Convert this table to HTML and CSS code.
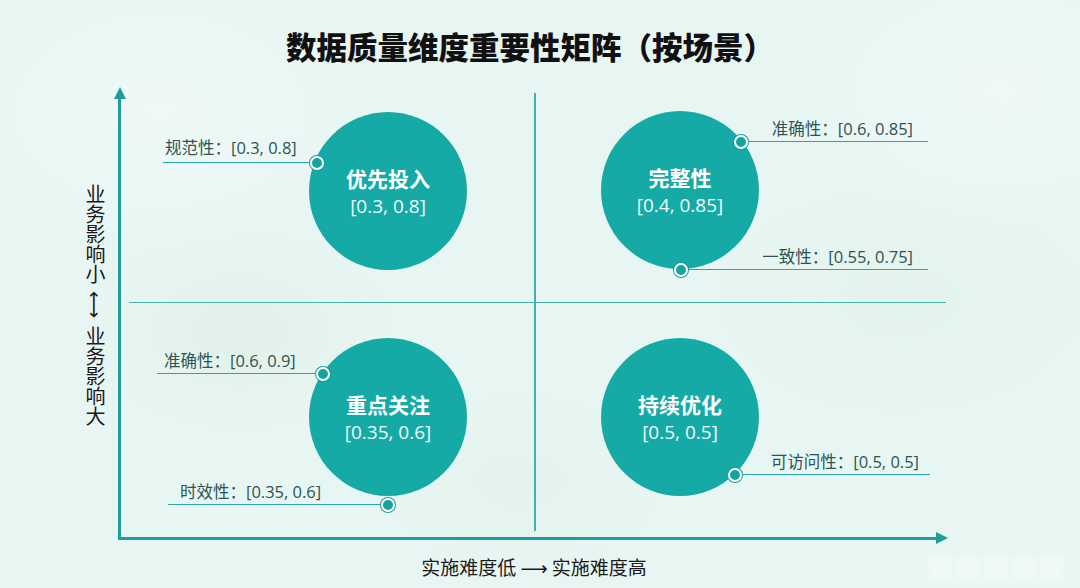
FILE: index.html
```html
<!DOCTYPE html>
<html lang="zh-CN">
<head>
<meta charset="utf-8">
<title>数据质量维度重要性矩阵（按场景）</title>
<link rel="stylesheet" href="styles.css">
</head>
<body>
<div class="page">
  <header class="title-row">
    <h1 class="title">数据质量维度重要性矩阵（按场景）</h1>
  </header>
  <main class="middle">
    <div class="ylabel">
      <span class="vtext">业务影响小</span>
      <span class="varrow">⟷</span>
      <span class="vtext">业务影响大</span>
    </div>
    <div class="plot">
      <div class="axis-y"></div>
      <svg class="arrow-up" width="12" height="12" viewBox="0 0 12 12"><polygon points="6,0 12,12 0,12" /></svg>
      <div class="axis-x"></div>
      <svg class="arrow-right" width="12" height="12" viewBox="0 0 12 12"><polygon points="0,0 12,6 0,12" /></svg>
      <div class="divider-v"></div>
      <div class="divider-h"></div>

      <div class="bubble b-tl"><span class="b-name">优先投入</span><span class="b-val">[0.3, 0.8]</span></div>
      <div class="bubble b-tr"><span class="b-name">完整性</span><span class="b-val">[0.4, 0.85]</span></div>
      <div class="bubble b-bl"><span class="b-name">重点关注</span><span class="b-val">[0.35, 0.6]</span></div>
      <div class="bubble b-br"><span class="b-name">持续优化</span><span class="b-val">[0.5, 0.5]</span></div>

      <div class="ann ann-left a-tl1"><span class="ann-text">规范性：[0.3, 0.8]</span><i class="dot"></i></div>
      <div class="ann ann-right a-tr1"><span class="ann-text">准确性：[0.6, 0.85]</span><i class="dot"></i></div>
      <div class="ann ann-right a-tr2"><span class="ann-text">一致性：[0.55, 0.75]</span><i class="dot"></i></div>
      <div class="ann ann-left a-bl1"><span class="ann-text">准确性：[0.6, 0.9]</span><i class="dot"></i></div>
      <div class="ann ann-left a-bl2"><span class="ann-text">时效性：[0.35, 0.6]</span><i class="dot"></i></div>
      <div class="ann ann-right a-br1"><span class="ann-text">可访问性：[0.5, 0.5]</span><i class="dot"></i></div>
    </div>
  </main>
  <footer class="xlabel">实施难度低<span class="harrow">⟶</span>实施难度高</footer>
  <div class="watermark"><i></i><i></i><i></i><i></i><i></i></div>
</div>
</body>
</html>
```

FILE: styles.css
```css
* { box-sizing: border-box; }
html, body {
  margin: 0;
  padding: 0;
}
body {
  width: 1080px;
  height: 588px;
  overflow: hidden;
  font-family: "Open Sans", "Noto Sans CJK SC", sans-serif;
  background-color: #e8f6f3;
  background-image:
    radial-gradient(ellipse 220px 140px at 240px 330px, rgba(220,238,226,0.6), rgba(220,238,226,0) 70%),
    radial-gradient(ellipse 260px 160px at 900px 300px, rgba(222,240,230,0.5), rgba(222,240,230,0) 70%),
    radial-gradient(ellipse 300px 200px at 160px 110px, rgba(240,250,248,0.8), rgba(240,250,248,0) 70%),
    radial-gradient(ellipse 300px 200px at 1000px 90px, rgba(240,250,248,0.8), rgba(240,250,248,0) 70%),
    radial-gradient(ellipse 200px 120px at 520px 480px, rgba(224,240,232,0.5), rgba(224,240,232,0) 70%);
}
.page {
  position: relative;
  width: 1080px;
  height: 588px;
  display: flex;
  flex-direction: column;
}
.title-row {
  height: 66px;
  padding-top: 30px;
  display: flex;
  justify-content: center;
  padding-right: 20px;
}
.title {
  margin: 0;
  font-family: "Noto Sans CJK SC", sans-serif;
  font-weight: 900;
  font-size: 30.5px;
  line-height: 36px;
  margin-top: -2px;
  height: 36px;
  color: #111;
}
.middle {
  height: 480px;
  display: flex;
}
.ylabel {
  width: 106px;
  flex: none;
  display: flex;
  flex-direction: column;
  align-items: flex-end;
  justify-content: center;
  padding-right: 1px;
  padding-bottom: 2px;
  color: #1a1a1a;
  font-family: "Noto Sans CJK SC", sans-serif;
  font-size: 20px;
}
.vtext {
  writing-mode: vertical-rl;
  text-orientation: upright;
  line-height: 20px;
  width: 20px;
}
.varrow {
  writing-mode: vertical-rl;
  text-orientation: sideways;
  font-family: "DejaVu Sans", sans-serif;
  font-size: 19px;
  line-height: 20px;
  width: 20px;
  margin: 7px 0;
}
.plot {
  position: relative;
  flex: 1;
}
.axis-y {
  position: absolute;
  left: 12px;
  top: 31px;
  width: 3px;
  height: 443px;
  background: #1d9e9a;
}
.arrow-up {
  position: absolute;
  left: 7.5px;
  top: 21px;
  fill: #1d9e9a;
}
.axis-x {
  position: absolute;
  left: 12px;
  top: 470.5px;
  width: 820px;
  height: 3px;
  background: #1d9e9a;
}
.arrow-right {
  position: absolute;
  left: 830px;
  top: 466px;
  fill: #1d9e9a;
}
.divider-v {
  position: absolute;
  left: 428px;
  top: 27px;
  width: 1.5px;
  height: 438px;
  background: #45b1ac;
}
.divider-h {
  position: absolute;
  left: 23px;
  top: 235.5px;
  width: 817px;
  height: 1.5px;
  background: #45b1ac;
}
.bubble {
  position: absolute;
  width: 158px;
  height: 158px;
  border-radius: 50%;
  background: #15aaa6;
  color: #fff;
  display: flex;
  flex-direction: column;
  align-items: center;
  justify-content: center;
  gap: 3px;
}
.b-tl { left: 203px; top: 46px; }
.b-tr { left: 495px; top: 45px; }
.b-bl { left: 203px; top: 272px; }
.b-br { left: 495px; top: 272px; }
.b-name {
  font-family: "Noto Sans CJK SC", sans-serif;
  font-weight: 700;
  font-size: 21px;
  line-height: 26px;
}
.b-val {
  font-size: 19px;
  line-height: 24px;
  color: #f2fbfa;
}
.ann {
  position: absolute;
  display: flex;
  align-items: flex-end;
  border-bottom: 1.5px solid #2aa7a2;
  padding-bottom: 2px;
  height: 22px;
  color: #2d5452;
}
.ann-left { justify-content: flex-start; }
.ann-right { justify-content: flex-end; }
.ann-text {
  font-size: 16.5px;
  line-height: 20px;
  white-space: nowrap;
}
.dot {
  position: absolute;
  bottom: -7.75px;
  width: 14px;
  height: 14px;
  border-radius: 50%;
  background: #15a39f;
  border: 2px solid #fff;
  box-shadow: 0 0 0 1px #1c9e9a;
}
.ann-left .dot { right: -7px; }
.ann-right .dot { left: -7px; }

.a-tl1 { left: 57px; top: 75px; width: 154px; padding-left: 2px; padding-bottom: 4px; }
.a-tr1 { left: 635px; top: 54px; width: 187px; padding-right: 15px; }
.a-tr2 { left: 575px; top: 182px; width: 247px; padding-right: 15px; }
.a-bl1 { left: 51px; top: 286px; width: 166px; padding-left: 7px; }
.a-bl2 { left: 62px; top: 417px; width: 220px; padding-left: 12px; }
.a-br1 { left: 629px; top: 387px; width: 195px; padding-right: 11px; }

.xlabel {
  height: 42px;
  line-height: 42px;
  text-align: center;
  padding-right: 12px;
  font-family: "Noto Sans CJK SC", sans-serif;
  font-size: 19px;
  color: #1a1a1a;
}
.harrow {
  font-family: "DejaVu Sans", sans-serif;
  font-size: 19px;
  margin: 0 4px;
}
.watermark {
  position: absolute;
  left: 928px;
  top: 556px;
  display: flex;
  gap: 4px;
  filter: blur(2px);
  opacity: 0.6;
}
.watermark i {
  display: block;
  width: 24px;
  height: 26px;
  background: rgba(255,255,255,0.5);
}
```
